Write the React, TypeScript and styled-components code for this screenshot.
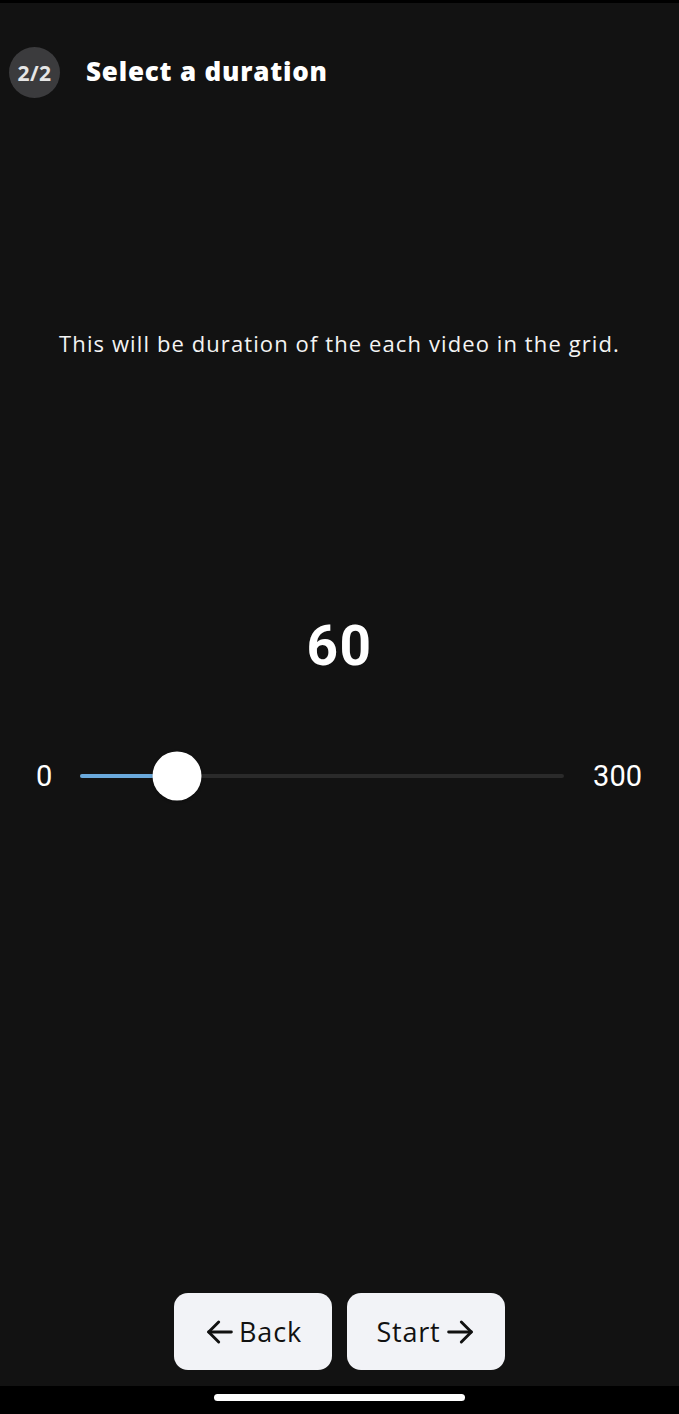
import React from "react";
import styled, { createGlobalStyle } from "styled-components";

const Global = createGlobalStyle`
  html, body { margin: 0; padding: 0; background: #121212; }
  body { font-family: "Open Sans", "Noto Sans", sans-serif; }
  * { box-sizing: border-box; }
`;

const Page = styled.div`
  width: 679px;
  height: 1414px;
  background: #121212;
  display: flex;
  flex-direction: column;
  color: #fff;
  overflow: hidden;
`;

const StatusStrip = styled.div`
  height: 3px;
  background: #000;
  flex: none;
`;

const Header = styled.header`
  display: flex;
  align-items: center;
  gap: 26px;
  padding: 44px 0 0 9px;
`;

const StepBadge = styled.div`
  width: 51px;
  height: 51px;
  border-radius: 50%;
  background: #3b3b3d;
  display: flex;
  align-items: center;
  justify-content: center;
  font-family: "Open Sans", sans-serif;
  font-weight: 700;
  font-size: 21px;
  color: #e6e6e6;
  letter-spacing: 0.5px;
`;

const Title = styled.h1`
  margin: 0 0 3px;
  font-family: "Open Sans", sans-serif;
  font-weight: 800;
  font-size: 26px;
  letter-spacing: 0.8px;
  color: #fff;
`;

const Subtitle = styled.p`
  margin: 230px 0 0;
  text-align: center;
  font-family: "Open Sans", sans-serif;
  font-size: 22px;
  line-height: 30px;
  color: #f4f4f4;
  letter-spacing: 1.1px;
`;

const Value = styled.div`
  margin-top: 256px;
  text-align: center;
  font-family: Roboto, "Liberation Sans", sans-serif;
  font-weight: 700;
  font-size: 55px;
  line-height: 64px;
  letter-spacing: 1.5px;
`;

const SliderRow = styled.div`
  margin-top: 73px;
  display: flex;
  align-items: center;
  height: 50px;
  padding: 0 37px 0 36px;
`;

const RangeLabel = styled.span<{ $side: "left" | "right" }>`
  font-family: Roboto, "Liberation Sans", sans-serif;
  font-size: 29px;
  color: #fff;
  margin-${(p) => (p.$side === "left" ? "right" : "left")}: ${(p) =>
    p.$side === "left" ? "28px" : "29px"};
`;

const Track = styled.div`
  position: relative;
  flex: 1;
  height: 4px;
  background: #2a2a2a;
  border-radius: 2px;
`;

const Fill = styled.div`
  position: absolute;
  left: 0;
  top: 0;
  bottom: 0;
  background: #6aa9dc;
  border-radius: 2px;
`;

const Thumb = styled.div`
  position: absolute;
  top: 50%;
  width: 49px;
  height: 49px;
  border-radius: 50%;
  background: #fff;
  transform: translate(-50%, -50%);
  box-shadow: 0 1px 3px rgba(0, 0, 0, 0.4);
`;

const Spacer = styled.div`
  flex: 1;
`;

const ButtonRow = styled.div`
  display: flex;
  justify-content: center;
  gap: 15px;
  padding-bottom: 16px;
`;

const NavButton = styled.button`
  width: 158px;
  height: 77px;
  border: none;
  border-radius: 14px;
  background: #f2f3f7;
  color: #111;
  display: flex;
  align-items: center;
  justify-content: center;
  gap: 3px;
  font-family: "Open Sans", sans-serif;
  font-size: 27px;
  font-weight: 500;
  letter-spacing: 0.8px;
  padding: 0;
`;

const NavBar = styled.div`
  height: 28px;
  background: #000;
  display: flex;
  justify-content: center;
  padding-top: 8px;
  flex: none;
`;

const HomeIndicator = styled.div`
  width: 251px;
  height: 7px;
  border-radius: 4px;
  background: #fff;
`;

const Arrow = ({ dir }: { dir: "left" | "right" }) => (
  <svg width="32" height="32" viewBox="0 0 24 24" fill="none" stroke="#111" strokeWidth="2.2" strokeLinecap="round" strokeLinejoin="round">
    {dir === "left" ? (
      <>
        <path d="M20.5 12H3.5" />
        <path d="M11 4.5L3.5 12l7.5 7.5" />
      </>
    ) : (
      <>
        <path d="M3.5 12h17" />
        <path d="M13 4.5l7.5 7.5-7.5 7.5" />
      </>
    )}
  </svg>
);

export default function App() {
  const min = 0;
  const max = 300;
  const value = 60;
  const pct = ((value - min) / (max - min)) * 100;
  return (
    <>
      <Global />
      <Page>
        <StatusStrip />
        <Header>
          <StepBadge>2/2</StepBadge>
          <Title>Select a duration</Title>
        </Header>
        <Subtitle>This will be duration of the each video in the grid.</Subtitle>
        <Value>{value}</Value>
        <SliderRow>
          <RangeLabel $side="left">{min}</RangeLabel>
          <Track>
            <Fill style={{ width: `${pct}%` }} />
            <Thumb style={{ left: `${pct}%` }} />
          </Track>
          <RangeLabel $side="right">{max}</RangeLabel>
        </SliderRow>
        <Spacer />
        <ButtonRow>
          <NavButton>
            <Arrow dir="left" />
            Back
          </NavButton>
          <NavButton>
            Start
            <Arrow dir="right" />
          </NavButton>
        </ButtonRow>
        <NavBar>
          <HomeIndicator />
        </NavBar>
      </Page>
    </>
  );
}
